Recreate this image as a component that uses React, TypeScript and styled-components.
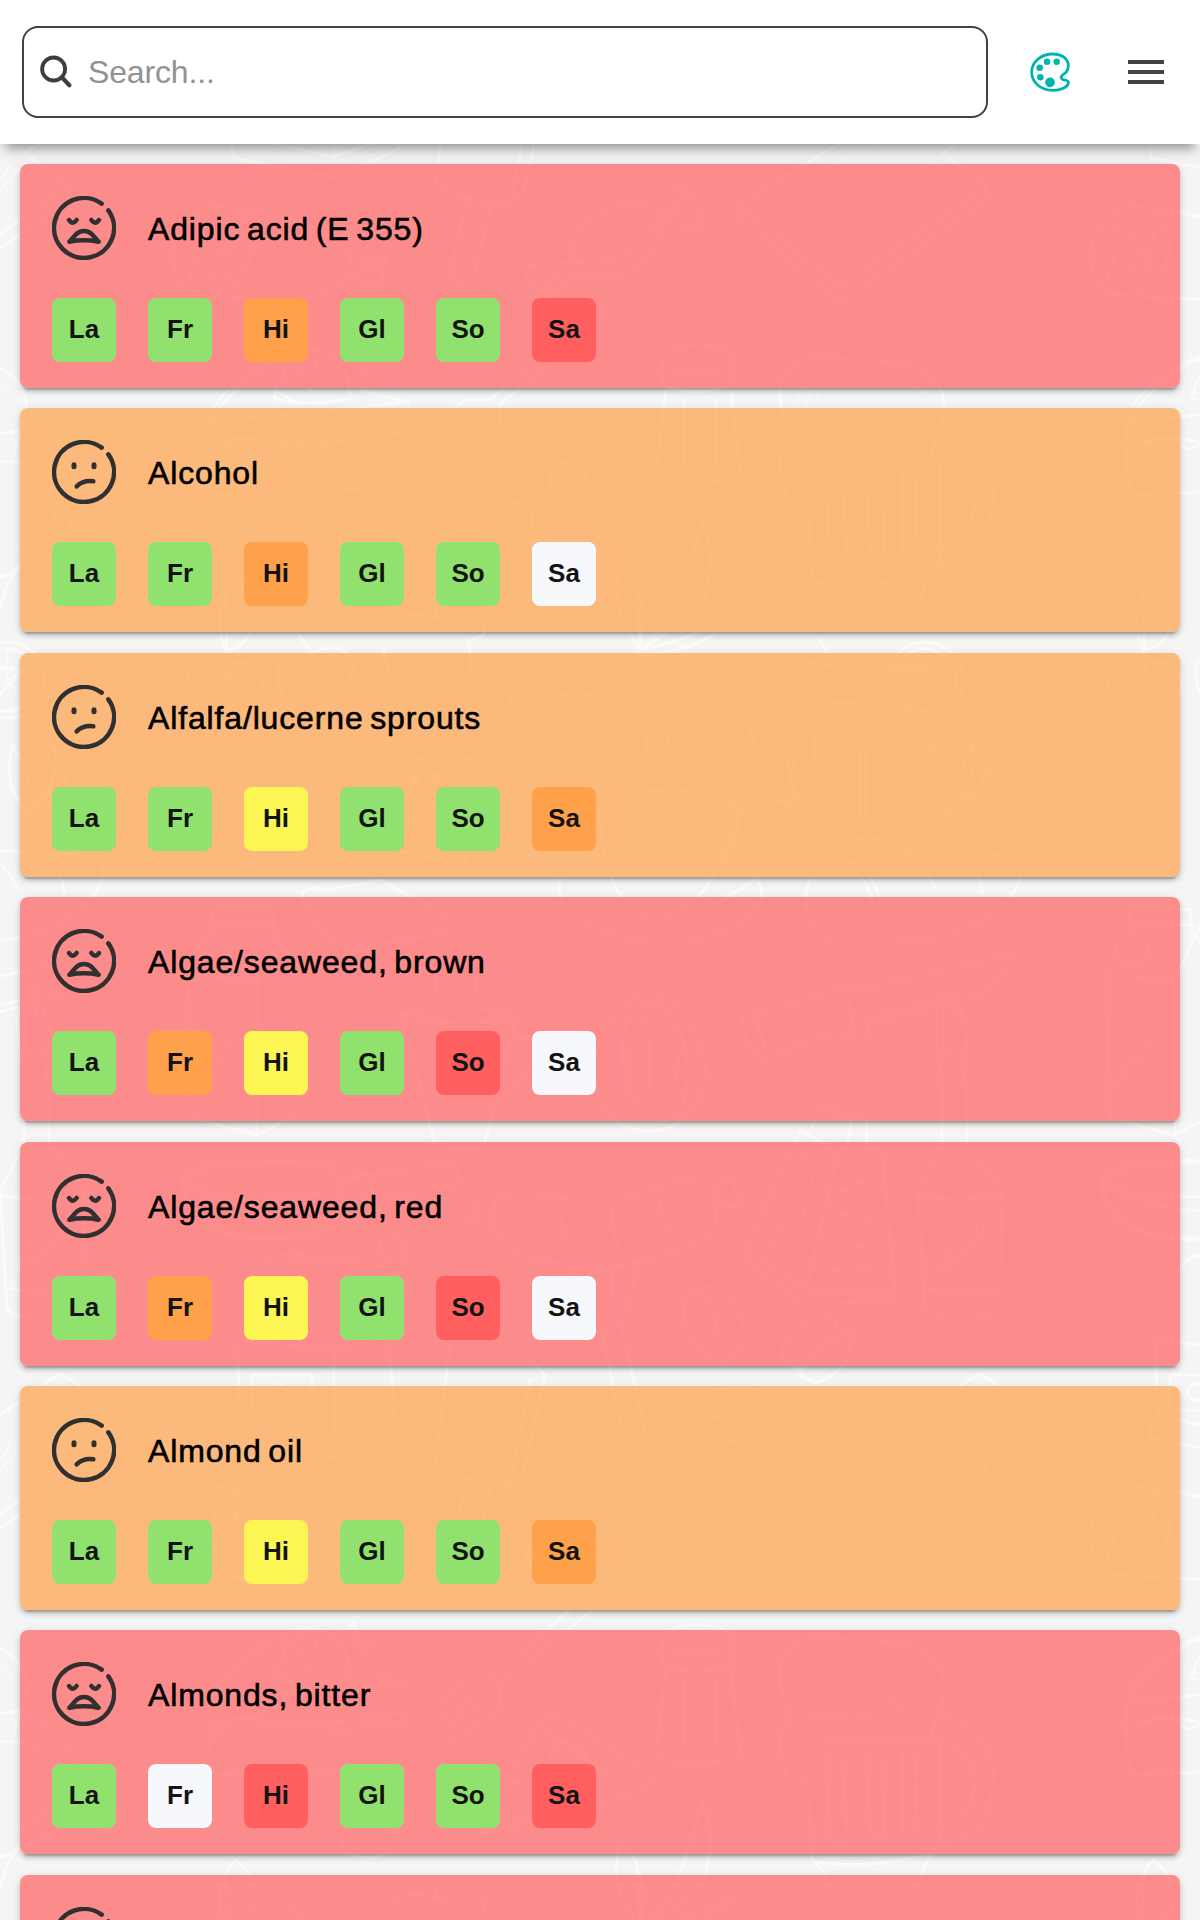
import React from "react";
import styled, { createGlobalStyle } from "styled-components";

type Level = "good" | "mild" | "medium" | "bad" | "unknown";
type Rating = "medium" | "bad";

interface Food {
  name: string;
  rating: Rating;
  levels: Level[];
}

const LEVEL_COLORS: Record<Level, string> = {
  good: "#90e16e",
  mild: "#fcf655",
  medium: "#ffa04a",
  bad: "#ff605f",
  unknown: "#f7f8fc",
};

const CARD_COLORS: Record<Rating, string> = {
  medium: "rgba(254, 160, 72, 0.7)",
  bad: "rgba(255, 96, 95, 0.7)",
};

const LABELS = ["La", "Fr", "Hi", "Gl", "So", "Sa"];

const FOODS: Food[] = [
  { name: "Adipic acid (E 355)", rating: "bad", levels: ["good", "good", "medium", "good", "good", "bad"] },
  { name: "Alcohol", rating: "medium", levels: ["good", "good", "medium", "good", "good", "unknown"] },
  { name: "Alfalfa/lucerne sprouts", rating: "medium", levels: ["good", "good", "mild", "good", "good", "medium"] },
  { name: "Algae/seaweed, brown", rating: "bad", levels: ["good", "medium", "mild", "good", "bad", "unknown"] },
  { name: "Algae/seaweed, red", rating: "bad", levels: ["good", "medium", "mild", "good", "bad", "unknown"] },
  { name: "Almond oil", rating: "medium", levels: ["good", "good", "mild", "good", "good", "medium"] },
  { name: "Almonds, bitter", rating: "bad", levels: ["good", "unknown", "bad", "good", "good", "bad"] },
  { name: "", rating: "bad", levels: [] },
];

const GlobalStyle = createGlobalStyle`
  * { box-sizing: border-box; }
  body {
    margin: 0;
    background: #f5f5f5;
    font-family: "Liberation Sans", Arial, Helvetica, sans-serif;
  }
`;

const Page = styled.div`
  position: relative;
  height: 1920px;
  overflow: hidden;
  background: #f5f5f5;
`;

const Backdrop = styled.svg`
  position: absolute;
  inset: 0;
  width: 1200px;
  height: 1920px;
  fill: none;
  stroke: #fefefd;
  stroke-width: 3;
  stroke-linecap: round;
  stroke-linejoin: round;
  opacity: 0.68;
`;

const Header = styled.header`
  position: relative;
  z-index: 2;
  display: flex;
  align-items: center;
  height: 144px;
  padding: 0 36px 0 22px;
  background: #fff;
  box-shadow:
    0 10px 10px -6px rgba(0, 0, 0, 0.34),
    0 6px 20px 0 rgba(0, 0, 0, 0.1);
`;

const SearchBox = styled.label`
  display: flex;
  align-items: center;
  width: 966px;
  height: 92px;
  padding-left: 16px;
  border: 2px solid #424242;
  border-radius: 16px;
`;

const SearchIcon = styled.svg`
  flex: none;
  width: 34px;
  height: 34px;
  fill: none;
  stroke: #3e3e3e;
  stroke-linecap: round;
`;

const SearchInput = styled.input`
  flex: 1;
  margin: 1px 16px 0 14px;
  padding: 0;
  border: 0;
  outline: 0;
  background: transparent;
  font: 32px "Liberation Sans", Arial, sans-serif;
  letter-spacing: -0.15px;
  &::placeholder {
    color: #929292;
    opacity: 1;
  }
`;

const PaletteButton = styled.button`
  display: flex;
  margin-left: 40px;
  padding: 0;
  border: 0;
  background: none;
`;

const MenuButton = styled.button`
  display: flex;
  flex-direction: column;
  gap: 6px;
  width: 36px;
  margin-left: auto;
  padding: 0;
  border: 0;
  background: none;
`;

const MenuBar = styled.span`
  height: 4px;
  background: #424242;
`;

const List = styled.main`
  position: relative;
  display: flex;
  flex-direction: column;
  gap: 20.4px;
  padding: 20px;
`;

const Card = styled.article<{ $rating: Rating }>`
  flex: none;
  height: 224px;
  padding: 32px;
  border-radius: 8px;
  background: ${(p) => CARD_COLORS[p.$rating]};
  box-shadow:
    0 6px 2px -4px rgba(0, 0, 0, 0.2),
    0 4px 4px 0 rgba(0, 0, 0, 0.14),
    0 2px 10px 0 rgba(0, 0, 0, 0.12);
`;

const CardHead = styled.div`
  display: flex;
  align-items: center;
  gap: 32px;
  height: 64px;
`;

const FaceIcon = styled.svg`
  flex: none;
  width: 64px;
  height: 64px;
  fill: none;
  stroke: #303030;
  stroke-width: 13.5;
  stroke-linecap: round;
  stroke-linejoin: round;
`;

const Title = styled.h2`
  margin: 2px 0 0;
  color: #000;
  font-size: 32px;
  font-weight: 400;
  line-height: 40px;
  letter-spacing: 0.85px;
  word-spacing: -3px;
  -webkit-text-stroke: 0.6px #000;
`;

const Chips = styled.div`
  display: flex;
  gap: 32px;
  margin-top: 38px;
`;

const Chip = styled.span<{ $level: Level }>`
  display: flex;
  align-items: center;
  justify-content: center;
  width: 64px;
  height: 64px;
  padding-bottom: 1px;
  border-radius: 8px;
  background: ${(p) => LEVEL_COLORS[p.$level]};
  color: #131313;
  font-size: 26px;
  font-weight: 700;
`;

const Face = ({ rating }: { rating: Rating }) => (
  <FaceIcon viewBox="-96 -96 192 192" aria-hidden="true">
    <path d="M53 -73A90 90 0 1 0 73 -53" />
    {rating === "bad" ? (
      <g>
        <path d="M-45 -24Q-34 -8 -22 -24M22 -24Q34 -8 45 -24" />
        <path d="M-44 41C-30 29 -24 9 0 9C24 9 30 29 44 41Q0 33 -44 41Z" />
      </g>
    ) : (
      <g>
        <path d="M-30 -22V-16M30 -22V-16" strokeWidth="15" />
        <path d="M-22 43Q-2 24 28 28" />
      </g>
    )}
  </FaceIcon>
);

const PaletteIcon = () => (
  <svg width="44" height="42" viewBox="384 153 132 126" fill="none" aria-hidden="true">
    <path
      d="M505 250C502 262 482 271 458 271C422 271 395 247 395 216C395 185 425 162 458 162C487 162 505 178 505 197C505 213 497 219 489 224C481 230 482 237 490 239C500 241 507 243 505 250Z"
      stroke="#00b3b3"
      strokeWidth="8.5"
    />
    <g fill="#00b3b3">
      <circle cx="441" cy="185" r="9.8" />
      <circle cx="470" cy="185" r="9.8" />
      <circle cx="419" cy="203" r="9.8" />
      <circle cx="421" cy="232" r="9.8" />
      <circle cx="450" cy="247" r="14.5" />
    </g>
  </svg>
);

/* One tile of the kitchen doodles; repeated every 918 x 1280 px. */
const Doodles = () => (
  <g id="doodles">
    {/* chocolate box */}
    <path d="M740 205L890 112L918 135L979 93L1004 110L943 153L987 187L840 287Z M740 205L738 216L840 303L987 200V187M840 287V303" />
    <path d="M766 198L905 130M772 214Q830 186 868 190Q860 222 826 252M790 228Q820 208 832 216M880 240Q915 190 945 162M900 210L928 165" strokeWidth="1.6" />
    {/* salami */}
    <ellipse cx="212" cy="251" rx="38" ry="46" transform="rotate(22 212 251)" />
    <path d="M222 207C300 215 350 235 352 268C345 302 280 303 196 294M352 264L386 256L380 290L352 276M360 266L384 272" />
    <path d="M198 224l3 4M216 235l-3 6M236 234v4M195 256v8M222 252l4 4M232 252v6M210 274l5 -4M190 276v4M232 270l-5 4" strokeWidth="5" />
    {/* ice lolly */}
    <path d="M450 66L436 180Q440 195 510 207L524 190L545 95L500 48Q465 45 450 66M530 100L510 205M467 200L450 272Q460 292 474 276L491 206" />
    {/* candy */}
    <ellipse cx="616" cy="241" rx="50" ry="32" transform="rotate(-30 616 241)" />
    <path d="M574 262L528 266Q520 284 548 296L580 270M660 212L678 186Q692 186 706 232L662 220M668 212L690 194M668 214L702 216M564 270L540 290M575 262Q630 270 655 224" />
    {/* paper bag */}
    <path d="M237 60L240 135L333 157L395 135L388 55L334 70L237 60M334 70V157M232 145L233 158L336 178L400 148L392 132M252 95h60v35h-60zM268 112q12 -18 18 0q-6 18 -18 0" />
    {/* cake */}
    <path d="M208 425Q208 495 216 495L408 487V402L360 390M208 425Q230 385 290 352Q320 338 345 370M208 422L408 402M212 458Q240 425 270 450Q310 432 340 455Q380 435 408 445M212 448Q240 432 270 440T350 440T408 432M274 398Q285 350 318 350Q350 360 350 398Q310 408 274 398M345 352L355 342V364L372 364L355 376" />
    <path d="M298 372v2M316 364v2M332 376v2M310 388v2" strokeWidth="4" />
    {/* fork */}
    <path d="M428 432L465 400L490 400L590 312Q600 300 610 310L602 322L500 404Q504 430 486 440L440 468M438 442L474 415M440 452L480 424" />
    {/* pizza */}
    <path d="M542 436L560 436L652 494Q650 506 635 514L480 555L542 436M545 450L620 502" />
    <ellipse cx="568" cy="482" rx="18" ry="20" />
    <ellipse cx="516" cy="520" rx="16" ry="18" />
    {/* jar */}
    <ellipse cx="697" cy="359" rx="36" ry="14" />
    <path d="M661 360L663 385Q695 398 733 385V360M666 390L656 470Q660 485 700 484L741 478L731 392M684 400V465M716 400V468" />
    {/* beer mug */}
    <path d="M787 492Q770 450 792 440Q775 405 782 378Q800 350 850 360Q890 360 918 368Q960 390 935 440L932 455M806 440Q820 430 855 440Q880 435 888 418Q905 440 936 430M808 440V510L812 580L824 592L830 608H918L925 585L940 560V460M785 490Q790 510 808 502M825 458L935 462M936 436Q985 440 994 490Q990 545 970 555L932 570M938 462Q970 465 976 500L970 528L938 550M826 475Q836 465 842 480L848 560Q838 575 830 560ZM866 475Q876 465 882 480L885 555Q876 565 870 550ZM902 475Q910 465 916 480L915 555Q908 565 902 555ZM816 582Q870 590 930 574" />
    <path d="M796 400l6 -14M806 404l6 -16M816 398l5 -10M914 380l8 14M922 384l8 14" strokeWidth="1.4" />
    {/* herbs */}
    <path d="M640 650Q605 600 622 560Q650 590 640 650Q680 620 702 520Q720 560 700 610L640 650M640 650L637 590M640 650Q690 640 736 614Q710 650 640 655" />
    {/* pear and strawberry */}
    <path d="M335 525Q345 540 342 570Q380 590 395 560Q410 530 380 522ZM225 650Q210 610 235 580Q250 590 258 612M225 650Q245 650 256 620M390 630Q400 605 440 620Q490 605 484 635L468 642Q480 690 440 700Q390 700 384 650M440 618Q428 608 446 600" />
    {/* cherries */}
    <path d="M226 596L227 678M210 676Q228 682 244 674M190 660Q200 654 226 664Q268 655 262 690Q250 722 215 716Q182 698 190 660M280 660Q270 700 310 715Q350 705 354 660Q340 640 312 653L290 622" />
    {/* macaroon */}
    <path d="M510 685Q520 665 555 668Q602 670 602 690Q604 700 510 690ZM510 695L512 710L600 706V698M512 712Q520 740 555 742Q595 735 600 710" />
    {/* cheese */}
    <path d="M385 785Q390 755 440 758Q510 755 525 790V850L466 868L400 850L385 785M466 868V820L525 800M385 785L466 820M302 895Q305 885 325 890L380 880L448 918L447 932L350 950Q310 930 302 895" />
    <path d="M415 780v2M435 775v3M440 838v3M412 820v3" strokeWidth="9" />
    {/* steaming cup */}
    <ellipse cx="670" cy="812" rx="70" ry="22" />
    <path d="M600 812Q602 900 650 920Q700 920 738 830M726 800Q755 815 720 850M560 880Q550 925 660 945Q760 935 762 890Q750 860 722 870M650 730q-8 14 0 26M672 728q-8 14 0 26M694 730q-8 14 0 26M722 872Q715 840 758 842Q790 855 758 878L715 905" />
    {/* martini */}
    <path d="M795 664L940 670L866 752V820Q905 826 895 836Q860 844 832 832Q830 824 860 820V752L795 664Q860 655 940 670M820 702L915 704M820 640L838 670" />
    <circle cx="925" cy="680" r="38" />
    <circle cx="925" cy="680" r="31" />
    <path d="M925 680L952 664M925 680L904 662M925 680V649M925 680L945 702M925 680L904 702" strokeWidth="1.8" />
    {/* mint leaves */}
    <path d="M807 815L735 770Q755 808 795 800Q745 750 750 712Q785 730 788 765Q790 785 795 800Q785 760 810 722Q825 760 796 800M945 828Q955 780 972 745Q980 785 950 805Q990 785 990 765Q970 810 947 812Q920 790 930 745Q950 770 947 800" />
    {/* baguette */}
    <path d="M806 892Q810 865 860 862Q900 845 960 854Q1030 850 1020 880Q1005 920 940 937Q830 955 815 930Q804 915 806 892M855 862Q880 880 880 910M905 854Q925 865 935 888M965 855Q980 870 982 892M856 870Q870 886 872 904" />
    {/* knife */}
    <path d="M742 1018L846 987L860 990L1013 954Q1000 990 970 998L868 1025L866 1040L852 1042L840 1030L762 1059Q745 1050 742 1018M846 988L856 1040M755 1018L768 1056M866 1018L960 995" />
    {/* juice carton */}
    <path d="M1130 925V909H1190L1192 930L1222 975V1110L1175 1135L1110 1118L1106 970L1118 958M1106 975L1175 980L1200 925M1175 980V1135M1130 925H1190" />
    <circle cx="1132" cy="950" r="16" />
    <text x="1118" y="1090" transform="rotate(-48 1118 1090)" fontFamily="Liberation Serif, serif" fontStyle="italic" fontSize="32" fill="#fefefd" stroke="none">juice</text>
    {/* tomato half */}
    <ellipse cx="655" cy="1062" rx="32" ry="60" transform="rotate(-8 655 1062)" />
    <path d="M650 990Q595 1010 594 1075Q600 1130 650 1131Q690 1130 707 1080Q700 1010 650 990M640 1020Q650 1010 660 1025M630 1050V1075M680 1050L675 1080M650 1040V1090" />
    {/* coffee cup */}
    <path d="M402 1015Q450 1000 516 1015L512 1040L484 1145Q460 1154 434 1142L402 1015Q460 1030 516 1018M438 975q-6 10 0 18M458 972q-6 10 0 18M478 975q-6 10 0 18M510 1040Q560 1030 520 1080L498 1102" />
    {/* frying pan */}
    <path d="M182 1178Q200 1158 258 1160Q330 1160 344 1182Q340 1238 270 1240Q190 1235 182 1178Q220 1208 344 1190M340 1180L452 1162Q466 1180 450 1188L346 1205" />
    {/* garlic and pepper */}
    <path d="M380 1240Q385 1225 405 1240Q410 1260 395 1265Q380 1260 380 1240M290 1258L350 1260Q380 1270 410 1262M262 1270Q270 1250 308 1255" />
    {/* sausage on a fork */}
    <path d="M495 1200Q510 1185 560 1198Q620 1205 660 1186Q700 1170 713 1200Q725 1235 690 1246Q600 1285 510 1250Q488 1230 495 1200M714 1200Q720 1175 732 1176Q734 1190 744 1207L716 1206M496 1215L470 1200L480 1215L466 1222L494 1224M520 1205v30M560 1208q0 20 8 35M612 1210q0 20 6 38M660 1198q0 20 10 35" />
    <path d="M568 1266L572 1300Q590 1310 600 1320L622 1432Q632 1442 645 1430L620 1320Q636 1300 635 1262M590 1268V1300M612 1266V1300" />
    {/* grater */}
    <path d="M800 1130L746 1248L806 1290L895 1290L882 1150L838 1152L800 1130M746 1248V1262L806 1305L895 1300V1290M838 1152L806 1290M812 1128L820 1106L867 1120V1150M826 1112L852 1120L846 1150" />
    <path d="M805 1155v2M798 1175v2M790 1200v2M812 1180v2M778 1226v2M804 1210v2M794 1240v2M770 1244v2M842 1190h8M858 1182h8M840 1215h8M862 1220h8M836 1240h8M858 1246h8M832 1270h8M860 1268h8" strokeWidth="4" />
    {/* olive oil */}
    <path d="M943 1060V990Q948 976 954 990V1015M938 1008H962V1018L968 1022L964 1085M938 1008L935 1022L942 1085V1145L918 1190L925 1310Q960 1330 1000 1310L1002 1190L967 1145V1085M942 1055H967M918 1195Q960 1204 1002 1193M924 1288Q960 1296 1000 1288" />
    <text x="942" y="1278" transform="rotate(-42 942 1278)" fontFamily="Liberation Serif, serif" fontStyle="italic" fontSize="36" fill="#fefefd" stroke="none">olive</text>
    {/* bowl */}
    <path d="M1100 1180Q1120 1165 1200 1162Q1300 1165 1290 1190Q1260 1215 1190 1210Q1110 1200 1100 1180Q1105 1240 1190 1238Q1270 1240 1290 1190" />
    {/* coffee beans */}
    <ellipse cx="714" cy="1324" rx="27" ry="40" transform="rotate(-28 714 1324)" />
    <path d="M700 1290Q715 1310 716 1325T735 1355M782 1360Q780 1320 835 1317Q840 1335 800 1370ZM800 1375Q810 1350 850 1330Q855 1370 815 1383ZM692 1415Q695 1390 730 1388Q770 1385 762 1405ZM693 1420L766 1412Q750 1445 720 1442Q700 1435 693 1420" />
    {/* lime wedge and cupcake */}
    <path d="M1128 412Q1150 380 1190 360Q1210 355 1200 385M1192 390L1210 400" />
  </g>
);

const TILE_WIDTH = 918;
const TILE_HEIGHT = 1280;

const Pattern = () => (
  <Backdrop viewBox="0 0 1200 1920" aria-hidden="true">
    <Doodles />
    <use href="#doodles" x={-TILE_WIDTH} />
    <use href="#doodles" x={TILE_WIDTH} />
    <use href="#doodles" x={-TILE_WIDTH} y={TILE_HEIGHT} />
    <use href="#doodles" y={TILE_HEIGHT} />
    <use href="#doodles" x={TILE_WIDTH} y={TILE_HEIGHT} />
  </Backdrop>
);

const FoodCard = ({ food }: { food: Food }) => (
  <Card $rating={food.rating}>
    <CardHead>
      <Face rating={food.rating} />
      {food.name && <Title>{food.name}</Title>}
    </CardHead>
    <Chips>
      {food.levels.map((level, i) => (
        <Chip key={LABELS[i]} $level={level}>
          {LABELS[i]}
        </Chip>
      ))}
    </Chips>
  </Card>
);

export default function App() {
  return (
    <>
      <GlobalStyle />
      <Page>
        <Pattern />
        <Header>
          <SearchBox>
            <SearchIcon viewBox="0 0 34 34">
              <circle cx="13.6" cy="14" r="11.5" strokeWidth="3.8" />
              <path d="M22 22.5L29.4 30.2" strokeWidth="4.2" />
            </SearchIcon>
            <SearchInput placeholder="Search..." />
          </SearchBox>
          <PaletteButton aria-label="Colors">
            <PaletteIcon />
          </PaletteButton>
          <MenuButton aria-label="Menu">
            <MenuBar />
            <MenuBar />
            <MenuBar />
          </MenuButton>
        </Header>
        <List>
          {FOODS.map((food, i) => (
            <FoodCard key={i} food={food} />
          ))}
        </List>
      </Page>
    </>
  );
}
